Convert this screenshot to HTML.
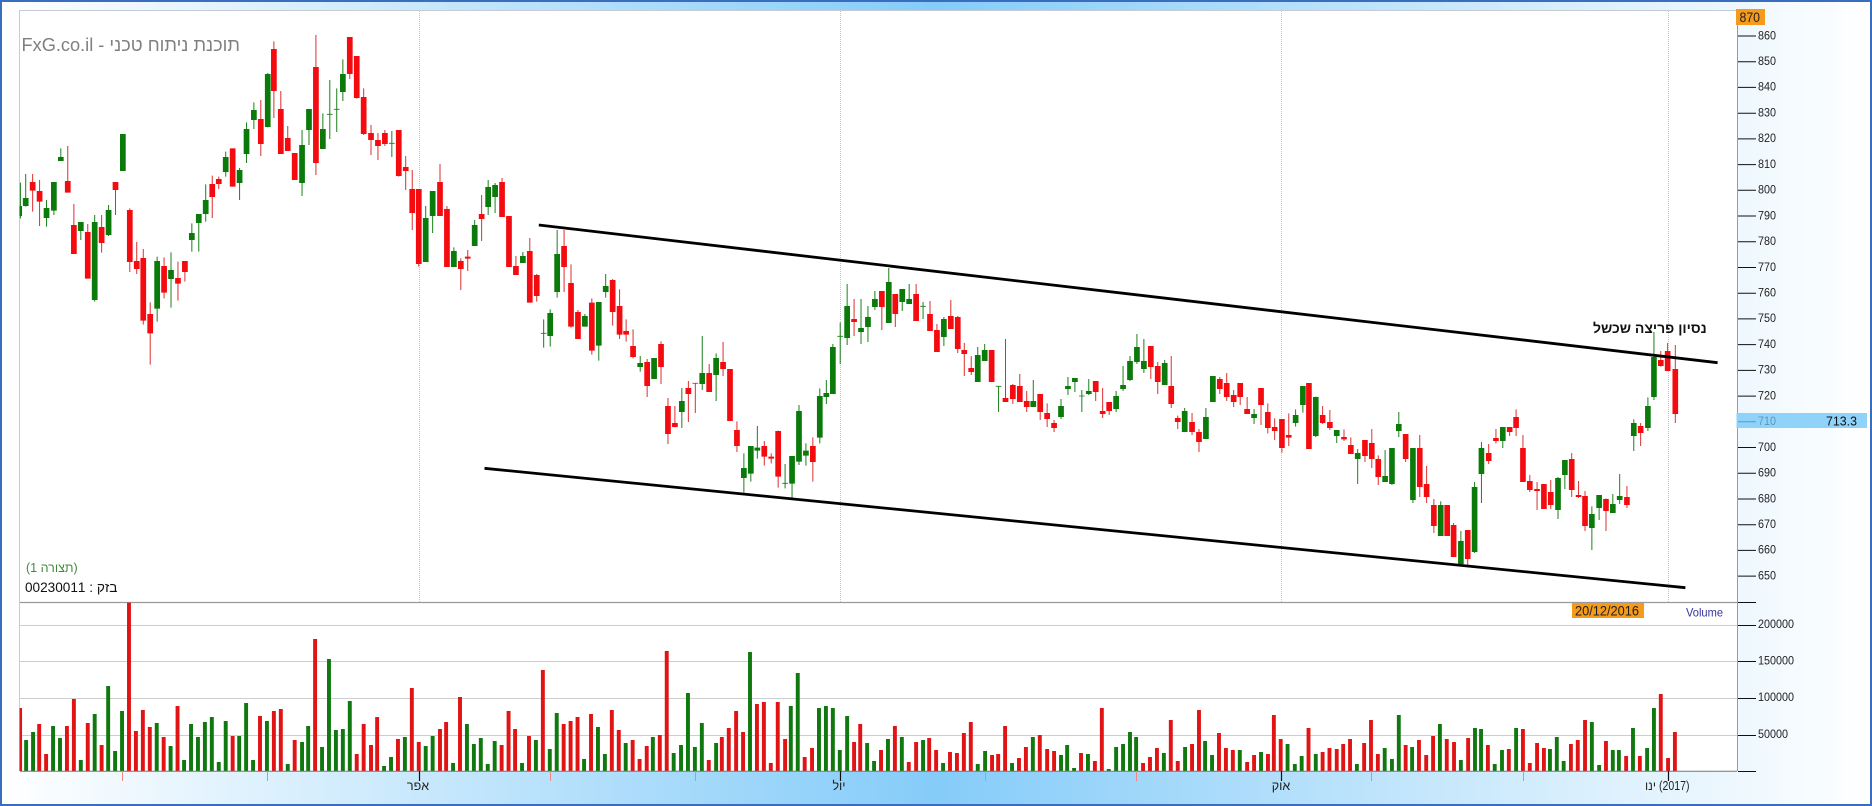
<!DOCTYPE html>
<html lang="he"><head><meta charset="utf-8"><title>FxG</title>
<style>
html,body{margin:0;padding:0;width:1872px;height:806px;overflow:hidden;background:#fff}
#f{position:absolute;left:0;top:0;width:1868px;height:802px;border:2px solid #3a6dbd;background:linear-gradient(90deg,#fff 0,#85ccf9 50%,#fff 100%)}
svg{position:absolute;left:0;top:0}
text{font-family:"Liberation Sans",sans-serif;fill:#222;font-size:12px}
.t{position:absolute;font-family:"Liberation Sans",sans-serif;direction:rtl;white-space:nowrap;unicode-bidi:plaintext}
.gw{stroke:#167e16;stroke-width:2.4;fill:none}
.rw{stroke:#dd2a2a;stroke-width:2.4;fill:none}
.gb{stroke:#0a7a0a;stroke-width:14;fill:none}
.rb{stroke:#f40b10;stroke-width:14;fill:none}
.gv{stroke:#0f780f;stroke-width:9.6;fill:none}
.rv{stroke:#e01414;stroke-width:9.6;fill:none}
</style></head><body>
<div id="f"></div>
<svg width="1872" height="806" viewBox="0 0 1872 806">
<rect x="19.5" y="10.5" width="1718" height="760.5" fill="#fff"/>
<path d="M19.5 771V10.5H1737.5" fill="none" stroke="#c6ccd4" stroke-width="1"/>
<path d="M419.5 11V602M840.5 11V602M1281.5 11V602M1668.5 11V602" stroke="#c4c4c4" stroke-width="1" stroke-dasharray="1 1" fill="none"/>
<path d="M20 625.5H1737M20 661.5H1737M20 698.5H1737M20 735.5H1737" stroke="#cdcdcd" stroke-width="1" fill="none"/>
<path d="M20 602.5H1737" stroke="#9a9a9a" stroke-width="1.2" fill="none"/>

<!-- candles left -->
<g transform="scale(.40816,.33333)">
<path style="stroke:#0a7a0a;stroke-width:6;fill:none" d="M51 618V648"/>
<path class="gw" d="M50 548V655M63 522V620M114 600V680M132 546V645M149 445V483M198 666V720M232 645V905M266 615V708M385 770V965M419 757V923M470 670V755M487 642V755M504 553V665M553 455V530M587 504V600M604 367V489M622 307V387M656 219V382M740 390V588M757 327V435M791 340V447M808 240V417M801 343H815M825 265V396M818 328H832M840 178V303M960 393V471M953 430H967M1043 618V786M1060 573V699M1112 742V801M1163 660V738M1196 540V645M1213 549V639M1281 756V789M1332 958V1043M1325 1000H1339M1348 928V1040M1365 690V893M1433 942V980M1467 906V1082M1484 822V893"/>
<path class="gb" d="M63 594V618M114 624V654M132 546V632M149 471V483M198 666V693M232 666V900M266 630V705M301 402V513M385 783V926M419 810V837M470 699V720M487 642V669M504 600V642M553 471V516M587 510V549M604 387V462M622 330V360M656 222V381M740 435V549M757 327V390M791 387V447M840 222V276M1043 654V786M1060 573V648M1112 753V801M1163 675V738M1196 561V621M1213 555V591M1281 768V789M1348 939V1008M1365 762V876M1433 948V980M1467 906V1037M1484 858V876"/>
<path class="rw" d="M80 522V635M97 540V678M166 438V578M181 612V762M215 672V836M249 645V758M283 546V645M318 625V816M335 726V822M351 747V974M368 907V1094M402 772V895M436 785V902M453 783V845M520 527V654M536 530V567M570 445V560M639 300V468M671 124V354M688 273V462M705 378V453M722 459V540M774 105V525M857 111V237M874 168V296M891 265V405M909 375V465M926 399V480M943 390V438M977 390V530M994 468V570M1010 510V690M1026 567V800M1078 492V648M1095 618V801M1129 775V870M1146 750V813M1180 585V723M1230 534V651M1247 648V801M1264 768V825M1298 714V908M1315 822V905M1382 690V876M1399 793V983M1416 930V1017M1450 895V1064M1501 837V977M1518 868V1017M1534 958V1025M1551 988V1075"/>
<path class="rb" d="M80 546V572M97 573V605M166 543V578M181 675V762M215 696V836M249 681V729M283 546V570M318 630V786M335 783V807M351 774V962M368 942V1000M402 798V878M436 834V851M453 783V816M520 552V591M536 537V552M570 445V560M639 357V432M671 147V273M688 327V462M705 414V453M722 459V540M774 201V489M857 111V222M874 168V294M891 291V402M909 399V420M926 420V438M943 399V432M977 390V528M994 501V513M1010 567V639M1026 567V792M1078 546V648M1095 627V801M1129 783V807M1146 770V776M1180 642V657M1230 546V651M1247 648V801M1264 798V825M1298 753V908M1315 825V888M1382 738V801M1399 849V980M1416 936V1017M1450 908V1052M1501 840V936M1518 918V1004M1534 993V1004M1551 1038V1071"/>
</g>

<!-- candles middle -->
<g transform="translate(630,160) scale(.40816,.33333)">
<path class="gw" d="M25 588V635M59 594V657M127 684V804M177 528V690M211 580V723M279 880V998M296 858V965M312 798V896M380 912V985M373 970H387M397 888V1018M414 735V915M431 850V917M465 685V850M481 660V732M497 552V702M515 487V612M508 529H522M532 372V555M566 417V552M583 438V546M600 393V450M634 324V489M667 387V453M684 372V432M718 426V477M711 439H725M769 471V558M852 561V666M869 552V603M903 678V756M896 679H910M988 660V741M1056 717V777M1073 651V705M1090 654V696M1107 690V756M1100 708H1114M1124 657V705M1191 693V756M1208 618V693M1225 588V663M1242 522V612M1259 537V639M1310 600V675M1359 744V816M1411 744V837M1529 747V792"/>
<path class="gb" d="M25 609V621M59 594V657M127 723V756M177 639V672M211 594V645M279 924V954M296 858V941M312 863V872M397 888V971M414 753V905M431 872V887M465 708V833M481 699V711M497 561V702M532 438V534M566 504V516M583 471V501M600 417V441M634 366V489M667 387V426M684 417V432M769 477V531M852 585V666M869 570V603M988 723V741M1056 738V771M1073 678V687M1090 654V666M1124 693V702M1191 708V747M1208 675V687M1225 603V660M1242 561V606M1259 603V627M1310 609V675M1359 753V816M1411 771V837M1428 648V726M1529 762V774"/>
<path class="rw" d="M42 597V711M76 544V672M93 714V852M110 738V802M143 663V786M160 669V759M153 670H167M194 612V696M228 546V648M245 627V783M262 784V876M329 843V917M346 880V910M363 812V983M448 832V965M549 417V528M617 393V510M650 402V501M701 372V483M735 423V513M752 492V576M786 420V507M803 468V579M819 549V648M836 588V645M886 570V666M920 537V726M938 672V732M955 642V726M972 693V756M1005 702V780M1022 730V801M1039 780V816M1141 663V723M1158 684V774M1174 726V765M1276 558V657M1293 606V702M1326 588V744M1342 767V807M1377 759V825M1394 807V876M1445 651V702M1462 639V723M1479 690V741M1495 669V735M1512 711V762M1546 684V795"/>
<path class="rb" d="M42 606V678M76 552V621M93 738V822M110 789V801M143 684V702M194 639V696M228 606V627M245 627V783M262 810V858M329 858V890M346 890V896M363 813V950M448 858V906M549 477V486M617 393V441M650 402V462M701 402V483M735 462V513M752 510V576M786 468V507M803 471V567M819 570V582M836 624V636M886 570V666M920 714V726M938 675V717M955 678V726M972 723V741M1005 702V756M1022 759V777M1039 789V804M1141 663V696M1158 753V762M1174 726V753M1276 558V621M1293 618V666M1326 678V732M1342 774V786M1377 786V816M1394 816V846M1445 657V687M1462 669V711M1479 705V726M1495 669V711M1512 747V762M1546 684V735"/>
</g>

<!-- candles right -->
<g transform="translate(1240,280) scale(.40306,.33333)">
<path class="gw" d="M138 388V440M156 318V398M188 350V471M240 450V489M292 507V612M360 510V606M377 504V615M394 396V471M429 504V669M498 664V768M548 753V858M582 606V819M599 486V669M652 441V504M789 591V717M806 540V627M873 679V810M891 645V720M925 642V699M942 582V672M977 418V513M1012 352V453M1027 156V360"/>
<path class="gb" d="M138 405V429M156 318V375M188 351V468M240 450V468M292 519V537M360 588V606M377 504V612M394 432V453M429 504V660M498 675V768M548 783V852M582 621V816M599 504V582M652 441V483M789 594V690M806 540V585M873 702V744M891 645V684M925 672V699M942 648V660M977 429V468M1012 378V444M1027 231V351"/>
<path class="rw" d="M69 370V460M86 415V480M104 417V518M121 400V498M171 309V507M205 378V432M223 390V450M258 448V483M275 472V522M310 480V546M327 447V564M343 526V615M411 462V546M446 465V651M463 558V669M481 657V759M514 675V768M530 729V831M565 750V855M617 492V552M635 447V490M669 441V468M685 388V468M702 465V606M719 585V636M737 606V690M754 612V687M771 600V687M823 519V651M840 603V654M856 633V753M908 655V753M960 618V684M994 429V498M1044 213V260M1061 189V273M1080 195V429"/>
<path class="rb" d="M69 396V444M86 441V453M104 417V504M121 465V473M171 309V507M205 405V429M223 426V444M258 471V478M275 495V522M310 480V528M327 489V537M343 537V591M411 462V537M446 504V621M463 612V651M481 675V738M514 675V768M530 735V831M565 750V837M617 519V543M635 474V483M669 441V456M685 411V444M702 504V606M719 603V630M737 627V633M754 612V687M771 636V675M823 537V630M840 645V651M856 648V738M908 657V693M960 651V675M994 438V459M1044 240V258M1061 213V273M1080 267V402"/>
</g>

<!-- trend lines -->
<path d="M538.8 225L1717.6 362.7M484.5 468.3L1685.4 587.7" stroke="#000" stroke-width="2.8" fill="none"/>

<!-- volume -->
<g transform="translate(0,540) scale(.40816,.33333)">
<path style="stroke:#e01414;stroke-width:6;fill:none" d="M51 504V693"/>
<path class="gv" d="M64 600V693M81 576V693M130 558V693M147 594V693M198 660V693M232 522V693M265 438V693M282 633V693M299 513V693M384 549V693M418 618V693M451 660V693M468 552V693M485 591V693M502 546V693M519 531V693M536 666V693M553 543V693M586 588V693M603 489V693M620 660V693M654 543V693M705 672V693M740 606V693M755 558V693M789 621V693M806 357V693M823 570V693M840 567V693M857 483V693M941 678V693M958 651V693M992 591V693M1043 618V693M1060 588V693M1110 669V693M1144 552V693M1161 612V693M1178 594V693M1195 672V693M1212 603V693M1279 669V693M1313 600V693M1347 627V693M1364 519V693M1431 657V693M1465 561V693M1482 642V693M1533 609V693"/>
<path class="rv" d="M96 552V693M113 642V693M164 558V693M181 477V693M215 549V693M249 615V693M316 188V693M333 573V693M350 510V693M367 561V693M401 591V693M435 498V693M570 588V693M637 528V693M671 513V693M688 507V693M722 600V693M772 297V693M874 642V693M891 552V693M909 615V693M924 531V693M975 597V693M1009 444V693M1026 606V693M1078 567V693M1093 546V693M1127 471V693M1229 615V693M1246 513V693M1262 567V693M1296 588V693M1330 390V693M1381 552V693M1398 543V693M1415 531V693M1448 522V693M1499 510V693M1516 570V693M1550 600V693M1567 657V693"/>
</g>
<g transform="translate(630,600) scale(.40816,.33333)">
<path class="gv" d="M56 411V513M107 459V513M125 435V513M142 279V513M159 441V513M176 369V513M211 429V513M294 156V513M394 318V513M411 219V513M463 324V513M480 318V513M497 324V513M514 450V513M532 348V513M581 429V513M598 483V513M632 417V513M666 411V513M718 420V513M767 489V513M852 492V513M870 453V513M936 489V513M987 411V513M1056 465V513M1071 435V513M1088 504V513M1122 462V513M1173 507V513M1191 441V513M1208 432V513M1225 396V513M1240 411V513M1308 459V513M1360 441V513M1409 423V513M1426 465V513M1494 450V513M1546 456V513"/>
<path class="rv" d="M41 438V513M73 405V513M90 153V513M193 480V513M225 411V513M242 384V513M260 333V513M277 396V513M311 312V513M328 306V513M345 489V513M362 306V513M380 417V513M428 471V513M446 444V513M549 426V513M564 372V513M615 450V513M649 378V513M683 486V513M701 426V513M733 414V513M750 450V513M784 456V513M801 459V513M818 399V513M835 366V513M887 465V513M902 462V513M919 378V513M953 474V513M970 441V513M1004 405V513M1022 447V513M1039 453V513M1105 459V513M1139 483V513M1156 324V513M1257 489V513M1274 471V513M1291 444V513M1325 360V513M1342 483V513M1377 432V513M1394 330V513M1443 399V513M1460 444V513M1477 450V513M1512 486V513M1529 465V513M1563 462V513"/>
</g>
<g transform="translate(1240,590) scale(.40306,.33333)">
<path class="gv" d="M118 462V544M136 522V544M153 498V544M188 492V544M290 522V544M359 474V544M377 507V544M394 375V544M427 471V544M496 402V544M548 510V544M583 414V544M598 417V544M632 522V544M650 480V544M685 414V544M769 477V544M786 441V544M803 513V544M873 396V544M891 525V544M925 480V544M940 480V544M975 414V544M1010 474V544M1027 354V544"/>
<path class="rv" d="M84 375V544M101 447V544M170 414V544M205 486V544M222 474V544M240 477V544M256 462V544M273 447V544M308 459V544M325 390V544M342 492V544M411 465V544M444 450V544M462 495V544M479 438V544M513 447V544M531 456V544M566 444V544M615 465V544M667 477V544M702 417V544M719 519V544M737 459V544M754 474V544M821 462V544M838 450V544M856 390V544M908 453V544M958 498V544M992 498V544M1044 312V544M1062 504V544M1079 426V544"/>
</g>

<!-- axis base & ticks -->
<path d="M20 771.2H1737" stroke="#777" stroke-width="1" fill="none"/>
<path d="M1737.5 11V771" stroke="#9a9a9a" stroke-width="1" fill="none"/>
<rect x="1736.5" y="413" width="130.5" height="15" fill="#8fd3fb"/>
<path d="M1738 36H1756M1738 61.7H1756M1738 87.4H1756M1738 113.2H1756M1738 138.9H1756M1738 164.6H1756M1738 190.3H1756M1738 216H1756M1738 241.8H1756M1738 267.5H1756M1738 293.2H1756M1738 318.9H1756M1738 344.6H1756M1738 370.4H1756M1738 396.1H1756M1738 447.5H1756M1738 473.2H1756M1738 499H1756M1738 524.7H1756M1738 550.4H1756M1738 576.1H1756M1738 602.5H1756M1738 625.5H1756M1738 661.5H1756M1738 698.5H1756M1738 735.5H1756M1738 771.5H1756" stroke="#111" stroke-width="1" fill="none"/>
<path d="M1738 421.8H1756" stroke="#5b9ac0" stroke-width="1" fill="none"/>
<g text-anchor="start">
<text x="1758" y="39.3" textLength="18" lengthAdjust="spacingAndGlyphs">860</text>
<text x="1758" y="65" textLength="18" lengthAdjust="spacingAndGlyphs">850</text>
<text x="1758" y="90.7" textLength="18" lengthAdjust="spacingAndGlyphs">840</text>
<text x="1758" y="116.5" textLength="18" lengthAdjust="spacingAndGlyphs">830</text>
<text x="1758" y="142.2" textLength="18" lengthAdjust="spacingAndGlyphs">820</text>
<text x="1758" y="167.9" textLength="18" lengthAdjust="spacingAndGlyphs">810</text>
<text x="1758" y="193.6" textLength="18" lengthAdjust="spacingAndGlyphs">800</text>
<text x="1758" y="219.3" textLength="18" lengthAdjust="spacingAndGlyphs">790</text>
<text x="1758" y="245.1" textLength="18" lengthAdjust="spacingAndGlyphs">780</text>
<text x="1758" y="270.8" textLength="18" lengthAdjust="spacingAndGlyphs">770</text>
<text x="1758" y="296.5" textLength="18" lengthAdjust="spacingAndGlyphs">760</text>
<text x="1758" y="322.2" textLength="18" lengthAdjust="spacingAndGlyphs">750</text>
<text x="1758" y="347.9" textLength="18" lengthAdjust="spacingAndGlyphs">740</text>
<text x="1758" y="373.7" textLength="18" lengthAdjust="spacingAndGlyphs">730</text>
<text x="1758" y="399.4" textLength="18" lengthAdjust="spacingAndGlyphs">720</text>
<text x="1758" y="425.1" textLength="18" lengthAdjust="spacingAndGlyphs" style="fill:#5b97b8">710</text>
<text x="1758" y="450.8" textLength="18" lengthAdjust="spacingAndGlyphs">700</text>
<text x="1758" y="476.5" textLength="18" lengthAdjust="spacingAndGlyphs">690</text>
<text x="1758" y="502.3" textLength="18" lengthAdjust="spacingAndGlyphs">680</text>
<text x="1758" y="528" textLength="18" lengthAdjust="spacingAndGlyphs">670</text>
<text x="1758" y="553.7" textLength="18" lengthAdjust="spacingAndGlyphs">660</text>
<text x="1758" y="579.4" textLength="18" lengthAdjust="spacingAndGlyphs">650</text>
<text x="1758" y="628" textLength="36" lengthAdjust="spacingAndGlyphs">200000</text>
<text x="1758" y="664.5" textLength="36" lengthAdjust="spacingAndGlyphs">150000</text>
<text x="1758" y="701" textLength="36" lengthAdjust="spacingAndGlyphs">100000</text>
<text x="1758" y="738" textLength="30" lengthAdjust="spacingAndGlyphs">50000</text>
</g>
<text x="1826" y="425.5" textLength="31" lengthAdjust="spacingAndGlyphs" style="font-size:13px;fill:#111">713.3</text>

<rect x="1736" y="9" width="29" height="16" fill="#f59a1a"/>
<text x="1739.5" y="22" textLength="20.5" lengthAdjust="spacingAndGlyphs" style="font-size:14px">870</text>
<rect x="1572" y="603" width="72" height="15" fill="#f59a1a"/>
<text x="1575" y="615.5" textLength="64" lengthAdjust="spacingAndGlyphs" style="font-size:13.5px">20/12/2016</text>
<text x="1686" y="616.5" textLength="37" lengthAdjust="spacingAndGlyphs" style="font-size:12px;fill:#33339a">Volume</text>

<!-- x axis -->
<path d="M419.5 771V781M840.5 771V781M1281.5 771V781M1668.5 771V781" stroke="#111" stroke-width="1.2" fill="none"/>
<path d="M122.5 771V781M267.5 771V781M550.5 771V781M695.5 771V781M985.5 771V781M1136.5 771V781M1371.5 771V781M1523.5 771V781" stroke="#e88" stroke-width="1" fill="none"/>
<text x="418" y="790" text-anchor="middle" style="font-size:12.5px">אפר</text>
<text x="839" y="790" text-anchor="middle" style="font-size:12.5px">יול</text>
<text x="1281" y="790" text-anchor="middle" style="font-size:12.5px">אוק</text>
<text x="1645" y="790" textLength="11" lengthAdjust="spacingAndGlyphs" style="font-size:12.5px">ינו</text>
<text x="1659" y="790" textLength="30.5" lengthAdjust="spacingAndGlyphs" style="font-size:12.5px">(2017)</text>
</svg>

<div class="t" style="left:21.5px;top:34px;width:220px;height:22px;line-height:22px;font-size:18.2px;color:#808080;text-align:left">תוכנת ניתוח טכני - FxG.co.il</div>
<div class="t" style="left:26px;top:560px;width:54px;line-height:16px;font-size:12.5px;color:#3f8a3f;text-align:left">(תצורה 1)</div>
<div class="t" style="left:25px;top:580px;width:94px;line-height:16px;font-size:13.6px;color:#111;text-align:left">בזק : 00230011</div>
<div class="t" style="left:1593px;top:319px;width:115px;line-height:18px;font-size:14px;font-weight:bold;color:#111;text-align:left">נסיון פריצה שכשל</div>
</body></html>
